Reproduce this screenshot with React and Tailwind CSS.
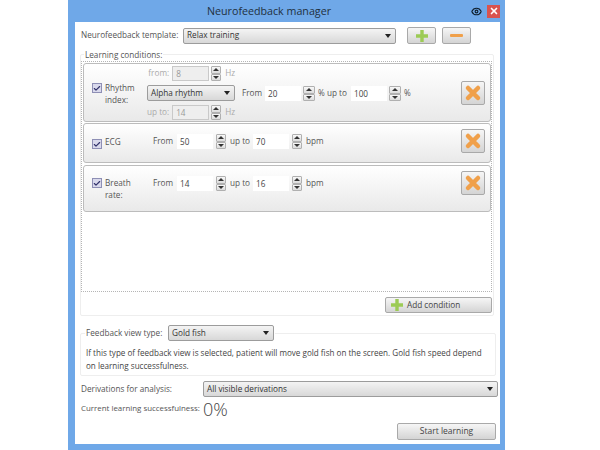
import React from "react";
import { Check, Eye, X } from "lucide-react";

const btn =
  "flex items-center justify-center rounded-[2px] border border-[#a9a9a9] bg-gradient-to-b from-[#f6f6f6] to-[#d4d4d4]";

const Caret = () => (
  <svg width="6" height="4" viewBox="0 0 6 4" className="shrink-0">
    <path d="M0 0h6L3 4z" fill="#222" />
  </svg>
);

const Select = ({ value, className }) => (
  <div
    className={`flex h-4 items-center justify-between rounded-[2px] border border-[#9c9c9c] bg-gradient-to-b from-[#f4f4f4] to-[#d8d8d8] pl-[3px] pr-[4px] text-[#333] ${className}`}
  >
    <span>{value}</span>
    <Caret />
  </div>
);

const Arrow = ({ down }) => (
  <div className="flex flex-1 items-center justify-center rounded-[1px] border border-[#b0b0b0] bg-gradient-to-b from-[#f8f8f8] to-[#dcdcdc]">
    <svg width="6" height="3" viewBox="0 0 6 3">
      <path d={down ? "M0 0h6L3 3z" : "M3 0l3 3H0z"} fill="#333" />
    </svg>
  </div>
);

// numeric box with up/down buttons; rhythm row uses slightly wider buttons
const Spinner = ({ value, disabled, wide }) => (
  <div className="flex h-[15px] items-stretch">
    <div
      className={`pl-[3px] ${
        disabled
          ? "w-[37px] border border-[#c9c9c9] bg-[#eeeeee] leading-[13px] text-[#999]"
          : "w-[36px] bg-white leading-[15px] text-[#444]"
      }`}
    >
      {value}
    </div>
    <div className={`flex flex-col ${wide ? "ml-[2px] w-[12px]" : disabled ? "ml-[2px] w-[10px]" : "ml-[3px] w-[10px]"}`}>
      <Arrow />
      <Arrow down />
    </div>
  </div>
);

const CheckBox = () => (
  <div className="flex h-[10px] w-[10px] shrink-0 items-center justify-center border border-[#8e8fb5] bg-[#d9d9ec]">
    <Check size={9} strokeWidth={3.5} className="text-[#33336b]" />
  </div>
);

const RemoveButton = ({ className }) => (
  <div className={`${btn} ml-auto mr-[5px] h-6 w-6 self-start ${className}`}>
    <svg width="18" height="18" viewBox="0 0 18 18">
      <path d="M4 4l10 10M14 4L4 14" stroke="#f0a04a" strokeWidth="4.5" strokeLinecap="round" />
    </svg>
  </div>
);

const Plus = ({ size = 14, color = "#9ccb55" }) => (
  <svg width={size} height={size} viewBox="0 0 14 14">
    <path d="M5 0h4v5h5v4H9v5H5V9H0V5h5z" fill={color} />
  </svg>
);

const Row = ({ className, children }) => (
  <div className={`flex items-start rounded-[3px] border border-[#bcbcbc] bg-gradient-to-b from-white via-[#f4f4f4] to-[#e9e9e9] ${className}`}>
    {children}
  </div>
);

// From / up to / bpm controls shared by the ECG and breath rows
const BpmRange = ({ from, to }) => (
  <div className="mt-[10px] flex items-center">
    <span className="w-[24px]">From</span>
    <Spinner value={from} />
    <span className="ml-[4px] w-[23px]">up to</span>
    <Spinner value={to} />
    <span className="ml-[4px]">bpm</span>
  </div>
);

export default function App() {
  return (
    <div className="h-[450px] w-[600px] overflow-hidden whitespace-nowrap bg-white pl-[68px] font-['Open_Sans',sans-serif] text-[8.2px] text-[#555]">
      <div className="flex h-[450px] w-[437px] flex-col bg-[#6fa8e8] pb-[6px] pl-[7px] pr-[5px]">
        <div className="flex h-[22px] shrink-0 items-center pl-[74px]">
          <span className="w-[240px] text-center text-[10.7px] text-[#1f3040]">
            Neurofeedback manager
          </span>
          <Eye size={11} strokeWidth={2.5} className="ml-[82px] text-[#10202e]" />
          <div className="ml-[5px] flex h-[13px] w-[13px] items-center justify-center bg-[#d9534f]">
            <X size={10} strokeWidth={4} className="text-white" />
          </div>
        </div>

        <div className="flex min-h-0 flex-1 flex-col bg-white pl-[5px] pt-[5px]">
          <div className="flex items-center pl-px">
            <span className="w-[102px]">Neurofeedback template:</span>
            <Select value="Relax training" className="w-[213px]" />
            <div className={`${btn} ml-[11px] h-[17px] w-[29px]`}>
              <Plus size={12} />
            </div>
            <div className={`${btn} ml-[6px] h-[17px] w-[29px]`}>
              <div className="h-[3px] w-[13px] rounded-[1px] bg-[#f0a04a]" />
            </div>
          </div>

          <fieldset className="mt-[4px] w-[414px] rounded-[2px] border border-[#eeeeee] pb-[2px]">
            <legend className="ml-[3px] px-px leading-[13px]">Learning conditions:</legend>
            <div className="mr-px h-[231px] border border-dotted border-[#b5b5b5] pl-px pt-px">
              <Row className="h-[59px]">
                <div className="ml-[8px] mt-[19px]"><CheckBox /></div>
                <span className="ml-[3px] mt-[18px] w-[30px] whitespace-normal leading-[12px]">Rhythm index:</span>
                <div className="ml-[12px] mt-[2px] flex w-[88px] flex-col gap-[4px]">
                  <div className="flex items-center text-[#aaa]">
                    <span className="w-[23px] text-right">from:</span>
                    <div className="ml-[3px]"><Spinner value="8" disabled /></div>
                    <span className="ml-[4px]">Hz</span>
                  </div>
                  <Select value="Alpha rhythm" className="w-[88px]" />
                  <div className="flex items-center text-[#aaa]">
                    <span className="w-[23px] text-right">up to:</span>
                    <div className="ml-[3px]"><Spinner value="14" disabled /></div>
                    <span className="ml-[4px]">Hz</span>
                  </div>
                </div>
                <div className="ml-[7px] mt-[22px] flex items-center">
                  <span className="w-[23px]">From</span>
                  <Spinner value="20" wide />
                  <span className="ml-[3px] w-[33px]">% up to</span>
                  <Spinner value="100" wide />
                  <span className="ml-[3px]">%</span>
                </div>
                <RemoveButton className="mt-[17px]" />
              </Row>
              <Row className="mt-px h-[40px]">
                <div className="ml-[8px] mt-[15px]"><CheckBox /></div>
                <span className="ml-[3px] mt-[12px] w-[48px]">ECG</span>
                <BpmRange from="50" to="70" />
                <RemoveButton className="mt-[5px]" />
              </Row>
              <Row className="mt-[2px] h-[47px]">
                <div className="ml-[8px] mt-[12px]"><CheckBox /></div>
                <span className="ml-[3px] mr-[18px] mt-[11px] w-[30px] whitespace-normal leading-[12px]">Breath rate:</span>
                <BpmRange from="14" to="16" />
                <RemoveButton className="mt-[5px]" />
              </Row>
            </div>
            <div className={`${btn} ml-auto mr-px mt-[5px] h-[16px] w-[107px] justify-start pl-[5px] text-[#444]`}>
              <Plus size={12} />
              <span className="ml-[4px] text-[8.2px]">Add condition</span>
            </div>
          </fieldset>

          <fieldset className="mt-[9px] h-[51px] w-[414px] rounded-[2px] border border-[#eeeeee] px-[5px]">
            <legend className="-ml-px flex items-center px-px">
              <span className="w-[82px]">Feedback view type:</span>
              <Select value="Gold fish" className="w-[106px]" />
            </legend>
            <p className="mt-[5px] w-[404px] whitespace-normal text-[8.1px] leading-[13px] text-[#444]">
              If this type of feedback view is selected, patient will move gold fish on the screen. Gold fish speed depend on learning successfulness.
            </p>
          </fieldset>

          <div className="mt-[5px] flex items-center pl-px">
            <span className="w-[122px]">Derivations for analysis:</span>
            <Select value="All visible derivations" className="w-[295px]" />
          </div>

          <div className="flex items-center pl-px">
            <span className="w-[122px] text-[7.9px]">Current learning successfulness:</span>
            <span className="text-[18px] font-light leading-[24px] text-[#444]">0%</span>
          </div>

          <div className={`${btn} ml-[317px] mt-[2px] h-[17px] w-[99px] text-[8.5px] text-[#444]`}>
            Start learning
          </div>
        </div>
      </div>
    </div>
  );
}
